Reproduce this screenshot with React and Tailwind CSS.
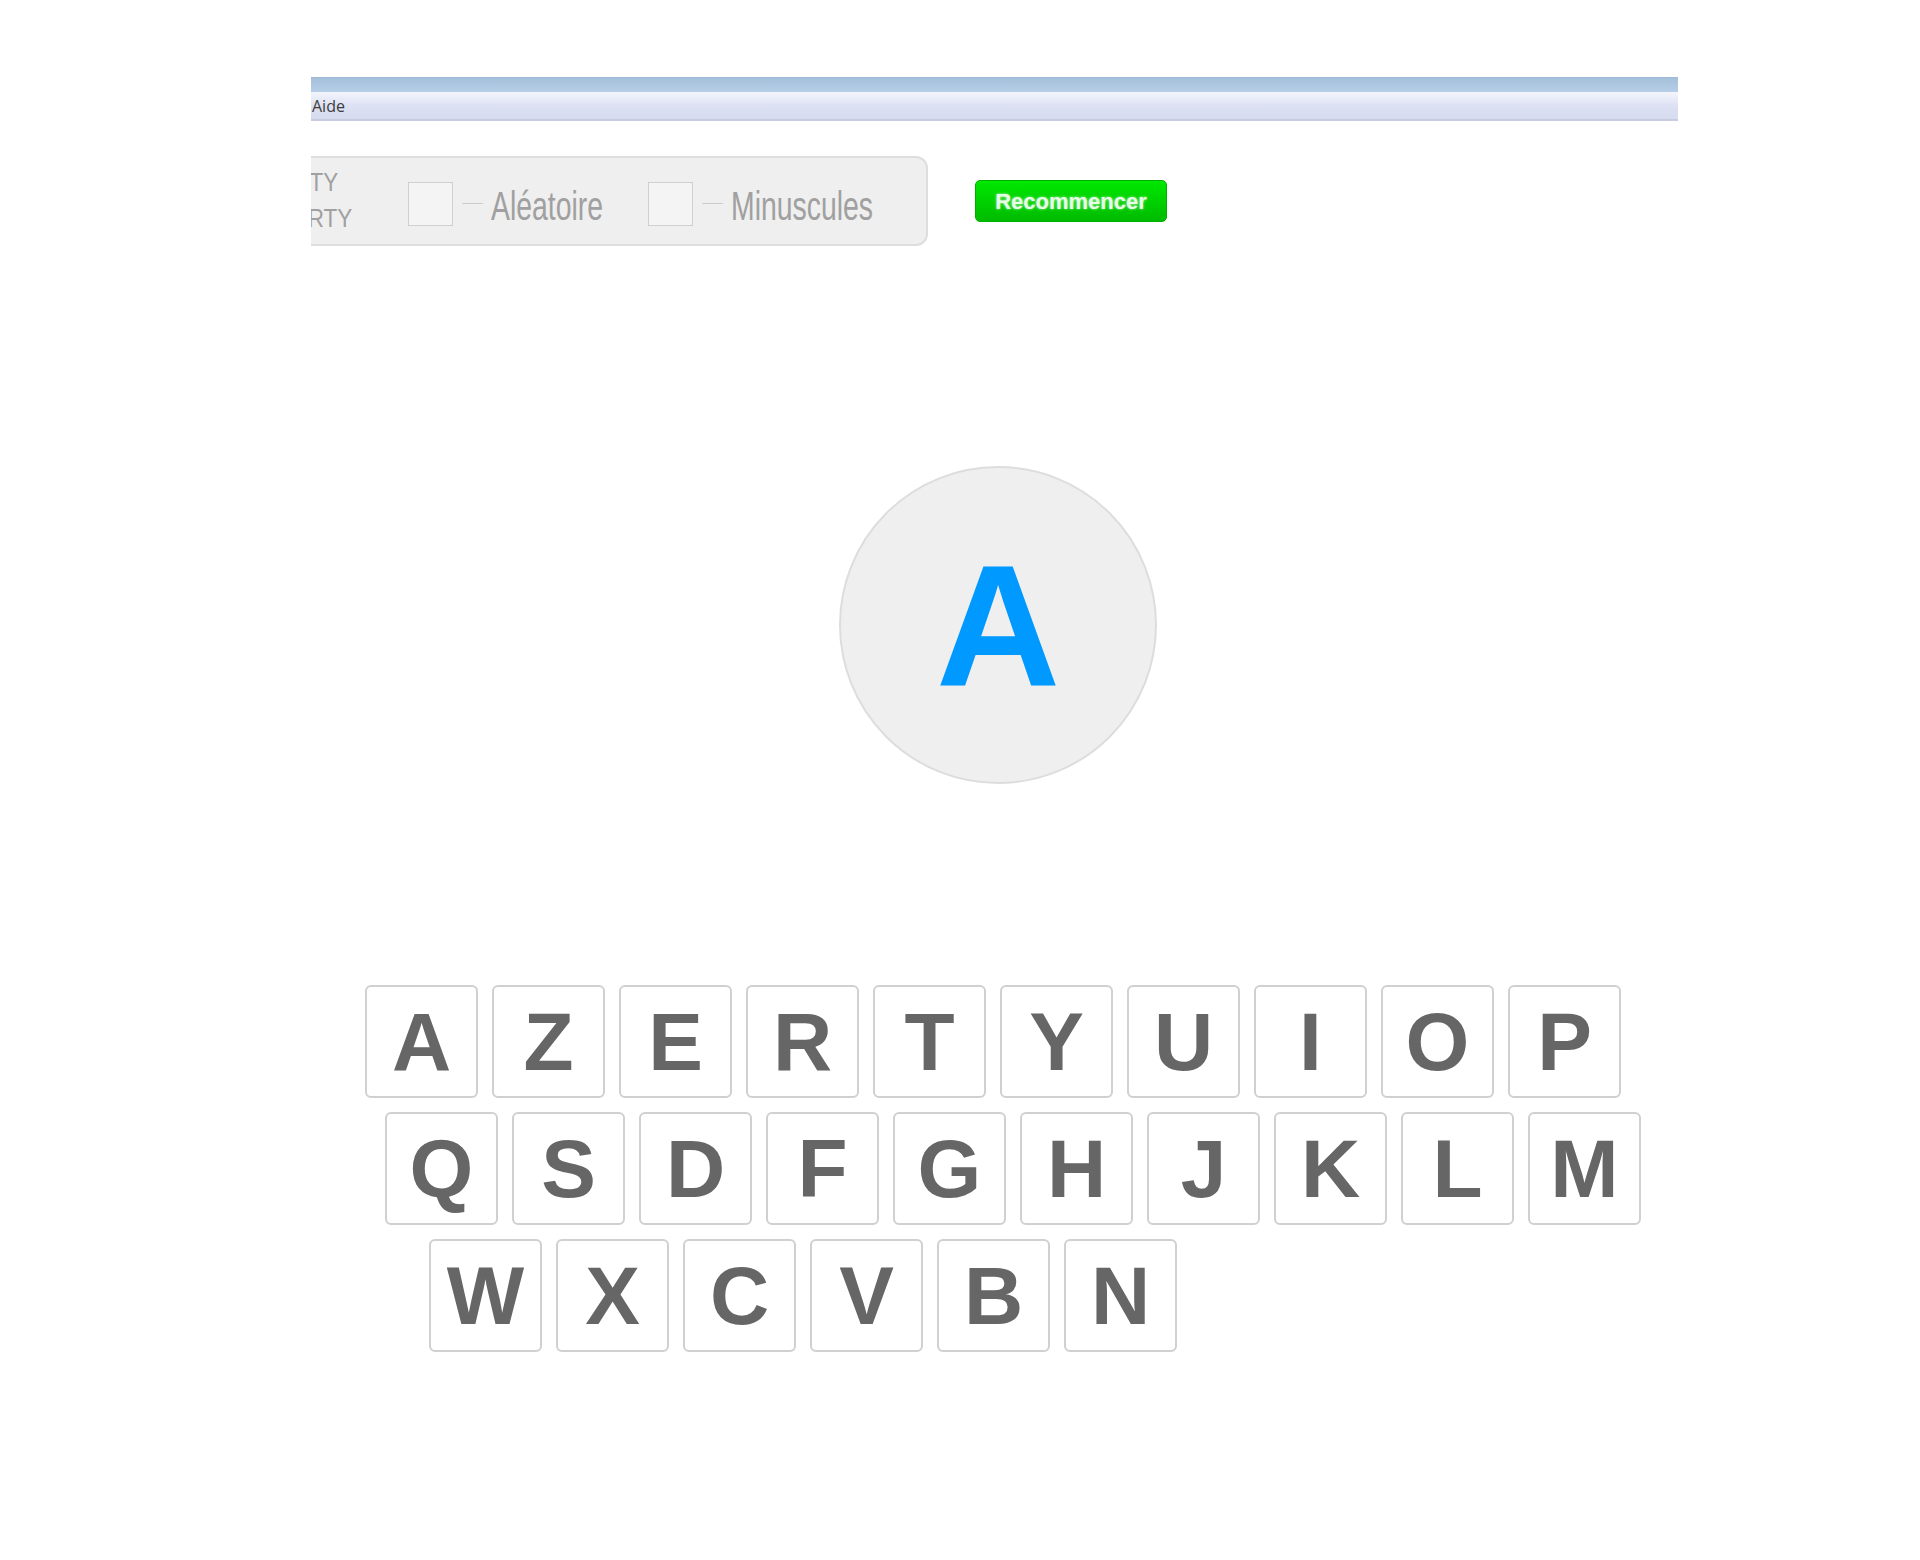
import React from "react";

const rows = [
  { offset: "ml-[54px]", keys: ["A", "Z", "E", "R", "T", "Y", "U", "I", "O", "P"] },
  { offset: "ml-[74px]", keys: ["Q", "S", "D", "F", "G", "H", "J", "K", "L", "M"] },
  { offset: "ml-[118px]", keys: ["W", "X", "C", "V", "B", "N"] },
];

const Option = ({ label, width, gap }) => (
  <div className={`flex items-center ${gap}`}>
    <div className="mt-[5px] h-[44px] w-[45px] border border-[#cfcfcf] bg-[#f4f4f4]" />
    <div className="ml-[9px] mt-[5px] h-px w-[21px] bg-[#cccccc]" />
    <div className={`ml-[8px] mt-[10px] ${width} text-[40px] leading-none text-[#a0a0a0]`}>
      <span className="inline-block origin-left scale-x-[0.71] whitespace-nowrap">{label}</span>
    </div>
  </div>
);

const App = () => {
  return (
    <div className="min-h-screen bg-white pt-[77px] font-['Liberation_Sans',Arial,sans-serif]">
      <div className="ml-[311px] w-[1367px]">
        {/* menu bar */}
        <div className="h-[44px]">
          <div className="h-[15px] border-t border-[#9fbad6] bg-gradient-to-b from-[#a5c0dc] to-[#b6cee7]" />
          <div className="flex h-[29px] items-center border-b-2 border-[#c9cce0] bg-gradient-to-b from-[#f4f6fc] via-[#dde1f3] to-[#d6dbef]">
            <span className="pl-px font-['Open_Sans',sans-serif] text-[16px] text-[#3c3c3c]">Aide</span>
          </div>
        </div>

        {/* toolbar */}
        <div className="mt-[35px] flex items-center">
          <div className="flex h-[90px] w-[617px] items-center overflow-hidden rounded-r-[12px] border-2 border-l-0 border-[#dedede] bg-[#efefef]">
            <div className="-mt-[2px] flex w-[41px] flex-col overflow-hidden text-[25px] leading-[36px] text-[#a0a0a0]">
              <div className="flex justify-end pr-[14px]">
                <span className="inline-block shrink-0 origin-right scale-x-[0.9] whitespace-nowrap">AZERTY</span>
              </div>
              <div className="flex justify-end">
                <span className="inline-block shrink-0 origin-right scale-x-[0.9] whitespace-nowrap">QWERTY</span>
              </div>
            </div>
            <Option label="Aléatoire" width="w-[114px]" gap="ml-[56px]" />
            <Option label="Minuscules" width="w-[140px]" gap="ml-[43px]" />
          </div>
          <button className="ml-[47px] h-[42px] w-[192px] rounded-[5px] border border-[#00b000] bg-gradient-to-b from-[#00e800] to-[#00bb00] text-[22px] font-bold text-[#e6ffe6] [text-shadow:0_0_3px_rgba(255,255,255,0.7)]">
            Recommencer
          </button>
        </div>

        {/* current letter */}
        <div className="ml-[528px] mt-[220px] flex h-[318px] w-[318px] items-center justify-center rounded-full border-2 border-[#dddddd] bg-[#efefef]">
          <span className="text-[172px] font-bold leading-none text-[#0099ff]">A</span>
        </div>

        {/* keyboard */}
        <div className="mt-[201px] flex flex-col gap-[14px]">
          {rows.map((row, i) => (
            <div key={i} className={`flex gap-[14px] ${row.offset}`}>
              {row.keys.map((k) => (
                <div
                  key={k}
                  className="flex h-[113px] w-[113px] items-center justify-center rounded-[6px] border-2 border-[#d0d0d0] bg-white text-[82px] font-bold leading-none text-[#666666]"
                >
                  {k}
                </div>
              ))}
            </div>
          ))}
        </div>
      </div>
    </div>
  );
};

export default App;
